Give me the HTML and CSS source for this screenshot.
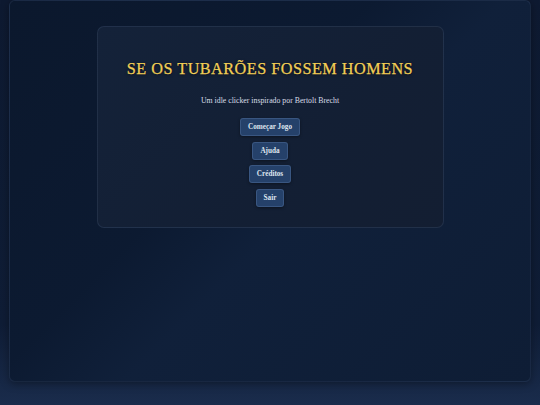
FILE: index.html
```
<!DOCTYPE html>
<html lang="pt">
<head>
<meta charset="utf-8">
<title>Se os Tubarões Fossem Homens</title>
<link rel="stylesheet" href="styles.css">
</head>
<body>
<div class="frame">
  <div class="card">
    <h1 class="title">SE OS TUBARÕES FOSSEM HOMENS</h1>
    <p class="subtitle">Um idle clicker inspirado por Bertolt Brecht</p>
    <div class="menu">
      <button class="btn">Começar Jogo</button>
      <button class="btn">Ajuda</button>
      <button class="btn">Créditos</button>
      <button class="btn">Sair</button>
    </div>
  </div>
</div>
</body>
</html>
```
FILE: styles.css
```
html, body {
  margin: 0;
  padding: 0;
  height: 100%;
}
body {
  background: linear-gradient(180deg, #0e1a31 0%, #0f1d36 80%, #1a2c4c 100%);
  font-family: "Liberation Serif", serif;
  overflow: hidden;
}
.frame {
  box-sizing: border-box;
  margin: 0 9px;
  height: 382px;
  border: 1px solid rgba(120, 150, 200, 0.12);
  border-radius: 6px;
  background: linear-gradient(135deg, #0b182d 0%, #0c1a31 40%, #10203a 55%, #0e1d35 100%);
  box-shadow: 0 2px 8px rgba(0, 0, 0, 0.35);
  padding-top: 25px;
  display: flex;
  flex-direction: column;
  align-items: center;
}
.card {
  box-sizing: border-box;
  width: 347px;
  height: 202px;
  border: 1px solid rgba(130, 160, 210, 0.13);
  border-radius: 7px;
  background: linear-gradient(135deg, #142239 0%, #131f34 60%, #131e32 100%);
  display: flex;
  flex-direction: column;
  align-items: center;
  padding-top: 31px;
}
.title {
  margin: 0;
  font-family: "Liberation Serif", serif;
  font-weight: normal;
  font-size: 16.2px;
  letter-spacing: 0.5px;
  line-height: 22px;
  color: #f2cf55;
  -webkit-text-stroke: 0.25px #f2cf55;
  text-shadow: 0 1px 3px rgba(0, 0, 0, 0.6);
}
.subtitle {
  margin: 16px 0 0;
  font-size: 7.8px;
  line-height: 10px;
  color: #d9dee8;
}
.menu {
  margin-top: 12px;
  display: flex;
  flex-direction: column;
  align-items: center;
  gap: 5.7px;
}
.btn {
  box-sizing: border-box;
  height: 18px;
  padding: 0 7px;
  font-family: "Liberation Serif", serif;
  font-weight: bold;
  font-size: 7.2px;
  color: #dfe5ef;
  background: #25416a;
  border: 1px solid rgba(130, 165, 215, 0.22);
  border-radius: 3px;
  box-shadow: 0 1px 3px rgba(0, 0, 0, 0.4);
}
```
